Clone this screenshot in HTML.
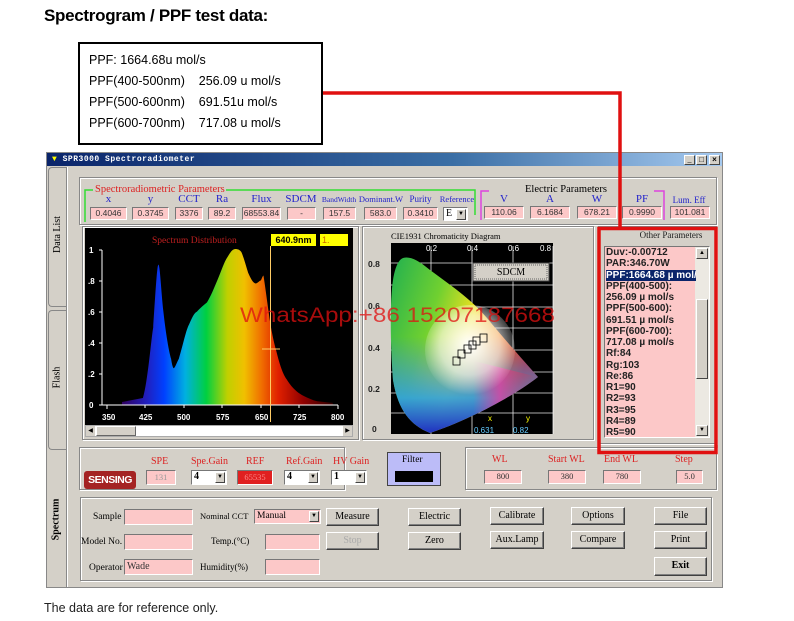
<!DOCTYPE html>
<html><head><meta charset="utf-8"><style>
*{margin:0;padding:0;box-sizing:border-box}
body{width:794px;height:621px;background:#fff;position:relative;overflow:hidden;font-family:"Liberation Serif",serif}
.a{position:absolute}
.t{position:absolute;font-size:10px;white-space:nowrap}
.in{position:absolute;background:#fcc8c8;border:1px solid;border-color:#777 #fff #fff #777;font-family:"Liberation Sans",sans-serif;font-size:8.5px;text-align:center;line-height:11px;color:#333}
.inL{text-align:left;padding-left:2px;font-family:"Liberation Serif",serif;font-size:10px}
.sel{position:absolute;background:#fff;border:1px solid;border-color:#777 #fff #fff #777;font-size:10px;font-weight:bold;padding-left:2px;line-height:12px}
.sel i{position:absolute;right:1px;top:1px;width:10px;height:11px;background:#d4d0c8;border:1px solid;border-color:#fff #444 #444 #fff;font-style:normal;font-size:6px;text-align:center;line-height:9px}
.btn{position:absolute;background:#d4d0c8;border:1px solid;border-color:#fff #404040 #404040 #fff;box-shadow:inset -1px -1px #808080;font-size:10px;text-align:center;line-height:16px}
.grp{position:absolute;border:1px solid #888;box-shadow:1px 1px #fff,inset 1px 1px #fff}
.lb{color:#2222cc;font-size:11px;text-align:center}
.rd{color:#dd2222}
</style></head><body>
<div class="a" style="left:44px;top:6px;font:bold 17px 'Liberation Sans',sans-serif;letter-spacing:-0.3px">Spectrogram / PPF test data:</div>
<div class="a" style="left:78px;top:42px;width:245px;height:103px;border:2.5px solid #000"></div>
<div class="a" style="left:89px;top:50px;font:12.5px 'Liberation Sans',sans-serif;line-height:21px;white-space:pre">PPF: 1664.68u mol/s
PPF(400-500nm)    256.09 u mol/s
PPF(500-600nm)    691.51u mol/s
PPF(600-700nm)    717.08 u mol/s</div>

<!-- window -->
<div class="a" style="left:46px;top:152px;width:677px;height:436px;background:#d4d0c8;border:1px solid #888"></div>
<div class="a" style="left:47px;top:153px;width:675px;height:13px;background:linear-gradient(90deg,#0a246a,#3a6ea5 60%,#a6caf0)"></div>
<div class="t" style="left:52px;top:153px;color:#fff;font:bold 8px 'Liberation Mono',monospace;line-height:13px;letter-spacing:0.5px"><span style="color:#ff0">▼</span> SPR3000 Spectroradiometer</div>
<div class="a" style="left:684px;top:155px;width:11px;height:10px;background:#d4d0c8;border:1px solid;border-color:#fff #444 #444 #fff;font-size:8px;line-height:8px;text-align:center">_</div>
<div class="a" style="left:696px;top:155px;width:11px;height:10px;background:#d4d0c8;border:1px solid;border-color:#fff #444 #444 #fff;font-size:8px;line-height:8px;text-align:center">□</div>
<div class="a" style="left:709px;top:155px;width:11px;height:10px;background:#d4d0c8;border:1px solid;border-color:#fff #444 #444 #fff;font:bold 8px sans-serif;line-height:8px;text-align:center">×</div>
<!-- tab strip -->
<div class="a" style="left:47px;top:167px;width:20px;height:420px;border-right:1px solid #888;box-shadow:1px 0 #fff"></div>
<div class="a" style="left:48px;top:167px;width:18px;height:140px;border:1px solid #888;border-right:none;border-radius:4px 0 0 4px"></div>
<div class="a" style="left:48px;top:310px;width:18px;height:140px;border:1px solid #888;border-right:none;border-radius:4px 0 0 4px"></div>
<div class="t" style="left:39px;top:229px;transform:rotate(-90deg);font-size:10px">Data List</div>
<div class="t" style="left:46px;top:372px;transform:rotate(-90deg);font-size:10px">Flash</div>
<div class="t" style="left:35px;top:514px;transform:rotate(-90deg);font-size:10px;font-weight:bold">Spectrum</div>

<!-- params group -->
<div class="grp" style="left:79px;top:177px;width:638px;height:48px"></div>
<div class="t rd" style="left:95px;top:184px;font-size:10.5px">Spectroradiometric Parameters</div>
<div class="t" style="left:525px;top:184px;font-size:10.5px">Electric Parameters</div>
<div class="t" style="left:628px;top:230px;font-size:9px;color:#222;width:86px;text-align:center">Other Parameters</div>
<div class="t" style="left:391px;top:231px;font-size:8.5px">CIE1931 Chromaticity Diagram</div>

<div class="t lb" style="left:90px;top:193px;width:37px">x</div>
<div class="t lb" style="left:132px;top:193px;width:37px">y</div>
<div class="t lb" style="left:175px;top:193px;width:28px">CCT</div>
<div class="t lb" style="left:208px;top:193px;width:28px">Ra</div>
<div class="t lb" style="left:242px;top:193px;width:39px">Flux</div>
<div class="t lb" style="left:285px;top:193px;width:32px">SDCM</div>
<div class="t lb" style="left:320px;top:195px;width:38px;font-size:7.5px">BandWidth</div>
<div class="t lb" style="left:357px;top:194px;width:48px;font-size:8.5px">Dominant.W</div>
<div class="t lb" style="left:403px;top:194px;width:35px;font-size:9px">Purity</div>
<div class="t lb" style="left:439px;top:194px;width:36px;font-size:8.5px">Reference</div>
<div class="t lb" style="left:484px;top:193px;width:40px">V</div>
<div class="t lb" style="left:530px;top:193px;width:40px">A</div>
<div class="t lb" style="left:577px;top:193px;width:40px">W</div>
<div class="t lb" style="left:622px;top:193px;width:40px">PF</div>
<div class="t lb" style="left:668px;top:195px;width:42px;font-size:9px">Lum. Eff</div>
<div class="in" style="left:90px;top:207px;width:37px;height:13px">0.4046</div>
<div class="in" style="left:132px;top:207px;width:37px;height:13px">0.3745</div>
<div class="in" style="left:175px;top:207px;width:28px;height:13px">3376</div>
<div class="in" style="left:208px;top:207px;width:28px;height:13px">89.2</div>
<div class="in" style="left:242px;top:207px;width:39px;height:13px">68553.84</div>
<div class="in" style="left:287px;top:207px;width:29px;height:13px">-</div>
<div class="in" style="left:323px;top:207px;width:33px;height:13px">157.5</div>
<div class="in" style="left:364px;top:207px;width:33px;height:13px">583.0</div>
<div class="in" style="left:403px;top:207px;width:35px;height:13px">0.3410</div>
<div class="sel" style="left:443px;top:207px;width:25px;height:14px;font-weight:normal">E<i>▼</i></div>
<div class="in" style="left:484px;top:206px;width:40px;height:13px">110.06</div>
<div class="in" style="left:530px;top:206px;width:40px;height:13px">6.1684</div>
<div class="in" style="left:577px;top:206px;width:40px;height:13px">678.21</div>
<div class="in" style="left:622px;top:206px;width:40px;height:13px">0.9990</div>
<div class="in" style="left:670px;top:206px;width:40px;height:13px">101.081</div>

<!-- spectrum -->
<div class="grp" style="left:82px;top:226px;width:277px;height:214px"></div>
<div class="a" style="left:85px;top:228px;width:268px;height:197px;background:#000"></div>
<div class="a" style="left:85px;top:425px;width:268px;height:12px;background:#fff;border:1px solid #aaa"></div>
<div class="a" style="left:86px;top:426px;width:9px;height:10px;background:#d4d0c8;font-size:6px;line-height:10px;text-align:center">◀</div>
<div class="a" style="left:96px;top:426px;width:40px;height:10px;background:#d4d0c8;border:1px solid;border-color:#fff #666 #666 #fff"></div>
<div class="a" style="left:343px;top:426px;width:9px;height:10px;background:#d4d0c8;font-size:6px;line-height:10px;text-align:center">▶</div>
<div class="t rd" style="left:152px;top:236px;font-size:9.5px;color:#c02020">Spectrum Distribution</div>
<div class="a" style="left:271px;top:234px;width:45px;height:12px;background:#ff0;font:bold 9px 'Liberation Sans',sans-serif;line-height:12px;text-align:center">640.9nm</div>
<div class="a" style="left:320px;top:234px;width:28px;height:12px;background:#ff0;font:9px 'Liberation Sans',sans-serif;line-height:12px;color:#c60;padding-left:2px">1.</div>

<!-- CIE -->
<div class="grp" style="left:362px;top:226px;width:232px;height:214px"></div>
<div class="a" style="left:391px;top:243px;width:162px;height:191px;background:#000"></div>

<!-- other params -->
<div class="grp" style="left:598px;top:226px;width:119px;height:218px"></div>
<div class="a" style="left:604px;top:246px;width:106px;height:192px;background:#fcc8c8;border:1px solid;border-color:#777 #fff #fff #777"></div>
<div class="a" style="left:695px;top:247px;width:14px;height:190px;background:#ece9e2"></div>
<div class="a" style="left:696px;top:248px;width:12px;height:11px;background:#d4d0c8;border:1px solid;border-color:#fff #444 #444 #fff;font-size:6px;text-align:center;line-height:9px">▲</div>
<div class="a" style="left:696px;top:299px;width:12px;height:80px;background:#d4d0c8;border:1px solid;border-color:#fff #444 #444 #fff"></div>
<div class="a" style="left:696px;top:425px;width:12px;height:11px;background:#d4d0c8;border:1px solid;border-color:#fff #444 #444 #fff;font-size:6px;text-align:center;line-height:9px">▼</div>
<div class="a" style="left:606px;top:247px;width:90px;font:bold 10px 'Liberation Sans',sans-serif;line-height:11.25px;color:#222;white-space:nowrap;overflow:hidden">Duv:-0.00712<br>PAR:346.70W<br><span style="display:block;background:#0a246a;color:#fff">PPF:1664.68 µ mol/s</span>PPF(400-500):<br>256.09 µ mol/s<br>PPF(500-600):<br>691.51 µ mol/s<br>PPF(600-700):<br>717.08 µ mol/s<br>Rf:84<br>Rg:103<br>Re:86<br>R1=90<br>R2=93<br>R3=95<br>R4=89<br>R5=90</div>

<!-- sensing group -->
<div class="grp" style="left:79px;top:447px;width:266px;height:43px"></div>
<div class="a" style="left:84px;top:471px;width:52px;height:18px;background:#a42323;border-radius:3px;color:#fff;font:bold 10.5px 'Liberation Sans',sans-serif;line-height:18px;text-align:center;letter-spacing:-0.5px">SENSING</div>
<div class="t rd" style="left:151px;top:456px">SPE</div>
<div class="t rd" style="left:191px;top:456px">Spe.Gain</div>
<div class="t rd" style="left:246px;top:456px">REF</div>
<div class="t rd" style="left:286px;top:456px">Ref.Gain</div>
<div class="t rd" style="left:333px;top:456px">HV Gain</div>
<div class="in" style="left:146px;top:470px;width:30px;height:15px;line-height:13px;font-family:'Liberation Serif';color:#999">131</div>
<div class="sel" style="left:191px;top:470px;width:36px;height:15px">4<i>▼</i></div>
<div class="in" style="left:237px;top:470px;width:36px;height:15px;line-height:13px;background:#e02020;color:#f88;font-family:'Liberation Serif'">65535</div>
<div class="sel" style="left:284px;top:470px;width:36px;height:15px">4<i>▼</i></div>
<div class="sel" style="left:331px;top:470px;width:36px;height:15px">1<i>▼</i></div>
<div class="a" style="left:387px;top:452px;width:54px;height:34px;background:#bcbcf8;border:1px solid #444"></div>
<div class="t" style="left:402px;top:455px;font-size:9.5px">Filter</div>
<div class="a" style="left:395px;top:471px;width:38px;height:11px;background:#000"></div>
<div class="grp" style="left:465px;top:447px;width:252px;height:43px"></div>
<div class="t rd" style="left:492px;top:454px">WL</div>
<div class="t rd" style="left:548px;top:454px">Start WL</div>
<div class="t rd" style="left:604px;top:454px">End WL</div>
<div class="t rd" style="left:675px;top:454px">Step</div>
<div class="in" style="left:484px;top:470px;width:38px;height:14px;font-family:'Liberation Serif'">800</div>
<div class="in" style="left:548px;top:470px;width:38px;height:14px;font-family:'Liberation Serif'">380</div>
<div class="in" style="left:603px;top:470px;width:38px;height:14px;font-family:'Liberation Serif'">780</div>
<div class="in" style="left:676px;top:470px;width:27px;height:14px;font-family:'Liberation Serif'">5.0</div>

<!-- bottom group -->
<div class="grp" style="left:80px;top:497px;width:632px;height:84px"></div>
<div class="t" style="left:93px;top:512px;font-size:9.5px">Sample</div>
<div class="t" style="left:81px;top:537px;font-size:9.5px">Model No.</div>
<div class="t" style="left:89px;top:563px;font-size:9.5px">Operator</div>
<div class="in" style="left:124px;top:509px;width:69px;height:16px"></div>
<div class="in" style="left:124px;top:534px;width:69px;height:16px"></div>
<div class="in inL" style="left:124px;top:559px;width:69px;height:16px;line-height:14px">Wade</div>
<div class="t" style="left:200px;top:511px;font-size:8.5px">Nominal CCT</div>
<div class="t" style="left:211px;top:536px;font-size:9px">Temp.(°C)</div>
<div class="t" style="left:200px;top:562px;font-size:9px">Humidity(%)</div>
<div class="sel" style="left:254px;top:509px;width:67px;height:15px;background:#fcc8c8;font-weight:normal;font-size:9.5px">Manual<i>▼</i></div>
<div class="in" style="left:265px;top:534px;width:55px;height:16px"></div>
<div class="in" style="left:265px;top:559px;width:55px;height:16px"></div>
<div class="btn" style="left:326px;top:508px;width:53px;height:18px">Measure</div>
<div class="btn" style="left:326px;top:532px;width:53px;height:18px;color:#aaa">Stop</div>
<div class="btn" style="left:408px;top:508px;width:53px;height:18px">Electric</div>
<div class="btn" style="left:408px;top:532px;width:53px;height:18px">Zero</div>
<div class="btn" style="left:490px;top:507px;width:54px;height:18px">Calibrate</div>
<div class="btn" style="left:490px;top:531px;width:54px;height:18px">Aux.Lamp</div>
<div class="btn" style="left:571px;top:507px;width:54px;height:18px">Options</div>
<div class="btn" style="left:571px;top:531px;width:54px;height:18px">Compare</div>
<div class="btn" style="left:654px;top:507px;width:53px;height:18px">File</div>
<div class="btn" style="left:654px;top:531px;width:53px;height:18px">Print</div>
<div class="btn" style="left:654px;top:557px;width:53px;height:19px;font-weight:bold">Exit</div>

<div class="a" style="left:44px;top:601px;font:12.5px 'Liberation Sans',sans-serif;color:#222">The data are for reference only.</div>

<svg class="a" style="left:0;top:0" width="794" height="621" viewBox="0 0 794 621">
<defs>
<linearGradient id="sp" x1="122" x2="333" y1="0" y2="0" gradientUnits="userSpaceOnUse">
<stop offset="0" stop-color="#300060"/><stop offset=".12" stop-color="#2020c0"/><stop offset=".2" stop-color="#0040ff"/>
<stop offset=".3" stop-color="#00b0e0"/><stop offset=".4" stop-color="#00d040"/><stop offset=".5" stop-color="#c0d000"/>
<stop offset=".58" stop-color="#f0c000"/><stop offset=".66" stop-color="#f07000"/><stop offset=".74" stop-color="#e02000"/>
<stop offset=".86" stop-color="#900000"/><stop offset="1" stop-color="#300000"/></linearGradient>
<linearGradient id="cg" x1="0" y1="0" x2="1" y2="0.4">
<stop offset="0" stop-color="#20b050"/><stop offset=".35" stop-color="#70d030"/><stop offset=".6" stop-color="#f0e020"/><stop offset=".8" stop-color="#f08020"/><stop offset="1" stop-color="#e02020"/></linearGradient>
<linearGradient id="cb" x1="0" y1="0" x2="0" y2="1">
<stop offset=".45" stop-color="#3080f0" stop-opacity="0"/><stop offset=".8" stop-color="#30a0e0" stop-opacity=".9"/><stop offset="1" stop-color="#2030c0"/></linearGradient>
<radialGradient id="cw" cx="470" cy="345" r="50" gradientUnits="userSpaceOnUse"><stop offset="0" stop-color="#fff"/><stop offset=".6" stop-color="#fff" stop-opacity=".6"/><stop offset="1" stop-color="#fff" stop-opacity="0"/></radialGradient>
<linearGradient id="cm" x1="0" y1="0" x2="1" y2="0"><stop offset=".4" stop-color="#e040a0" stop-opacity="0"/><stop offset=".65" stop-color="#e040a0" stop-opacity=".8"/><stop offset="1" stop-color="#e03030" stop-opacity="0"/></linearGradient>
</defs>
<path fill="url(#sp)" d="M122,402 L142.9,398 C148,380 151,340 153.2,327.5 C155,300 157,265 158.3,264.7 C160,264 161,290 163.4,311.8 C166,335 169,352 171.1,358.9 C172,365 173,368 173.7,368.3 C175,368 177,362 178.8,358.9 C183,345 186,330 189.1,324.4 C192,318 194,313 196.8,311.8 C200,308 204,305 207,302.4 C211,296 214,288 217.3,280.4 C221,272 224,262 227.6,256.9 C231,251 233,249 235.3,249 C238,249 240,250 241.4,252.1 C244,258 246,266 248.1,272.6 C251,279 253,283 255.8,283.5 C258,283 259,281 260.9,280.4 C262,278 263,275 263.5,275.7 C265,285 267,300 268.6,311.8 C271,330 274,343 276.3,351 C280,366 283,374 286.6,379.3 C292,388 297,392 301.9,395 C308,398 312,400 317.3,401.3 L332.7,402.9 L333,405 L122,405Z"/>
<g stroke="#fff" stroke-width="1" fill="none"><path d="M102,405H338M102,405V250"/>
<path d="M99,250h3M99,281h3M99,312h3M99,343h3M99,374h3M99,405h3M107,405v4M145,405v3M184,405v3M222,405v3M261,405v3M299,405v3M338,405v4"/></g>
<line x1="270.5" y1="246" x2="270.5" y2="422" stroke="#ffcc66"/><line x1="262" y1="349" x2="280" y2="349" stroke="#ffcc66"/>
<g fill="#fff" font-family="Liberation Sans,sans-serif" font-size="8" font-weight="bold">
<text x="89" y="253">1</text><text x="88" y="284">.8</text><text x="88" y="315">.6</text><text x="88" y="346">.4</text><text x="88" y="377">.2</text><text x="89" y="408">0</text>
<text x="102" y="420">350</text><text x="139" y="420">425</text><text x="177" y="420">500</text><text x="216" y="420">575</text><text x="255" y="420">650</text><text x="293" y="420">725</text><text x="331" y="420">800</text></g>
<g stroke="#fff" stroke-width="0.8" opacity=".9"><path d="M431,246V434M472,246V434M513,246V434M553,246V434M391,263H553M391,285H553M391,307H553M391,328H553M391,350H553M391,372H553M391,393H553M391,413H553"/></g>
<path d="M403,258 C410,256 418,260 430,270 C450,285 470,298 487,318 C505,340 525,362 538,377 C515,395 470,420 430,433 C410,425 398,410 393,380 C390,340 390,300 393,280 C395,268 398,260 403,258Z" fill="url(#cg)"/>
<path d="M403,258 C410,256 418,260 430,270 C450,285 470,298 487,318 C505,340 525,362 538,377 C515,395 470,420 430,433 C410,425 398,410 393,380 C390,340 390,300 393,280 C395,268 398,260 403,258Z" fill="url(#cb)"/>
<path d="M430,433 C470,420 515,395 538,377 L470,360Z" fill="url(#cm)"/>
<circle cx="470" cy="350" r="45" fill="url(#cw)"/>
<g fill="none" stroke="#000" stroke-width=".8"><rect x="453" y="357" width="7" height="8"/><rect x="458" y="350" width="7" height="8"/><rect x="464" y="345" width="7" height="8"/><rect x="469" y="341" width="7" height="8"/><rect x="473" y="337" width="7" height="8"/><rect x="480" y="334" width="7" height="8"/></g>
<g font-family="Liberation Sans,sans-serif" font-size="8" fill="#fff"><text x="426" y="251">0.2</text><text x="467" y="251">0.4</text><text x="508" y="251">0.6</text><text x="540" y="251">0.8</text>
<text x="488" y="421" fill="#ff0">x</text><text x="526" y="421" fill="#ff0">y</text><text x="474" y="433" fill="#6cf">0.631</text><text x="513" y="433" fill="#6cf">0.82</text></g>
<g font-family="Liberation Sans,sans-serif" font-size="8.5" font-weight="bold" fill="#222"><text x="368" y="267">0.8</text><text x="368" y="309">0.6</text><text x="368" y="351">0.4</text><text x="368" y="392">0.2</text><text x="372" y="432">0</text></g>
<rect x="473" y="263" width="76" height="18" fill="#d4d0c8" stroke="#444"/><rect x="475" y="265" width="72" height="14" fill="none" stroke="#666" stroke-dasharray="1 1"/>
<text x="511" y="275" text-anchor="middle" font-family="Liberation Serif,serif" font-size="10">SDCM</text>
<g fill="none" stroke-width="1.5"><path d="M85,222V190H93M226,190H475V215" stroke="#33dd33"/><path d="M481,220V191H489" stroke="#dd44dd"/><path d="M654,191H664V220" stroke="#dd44dd"/></g>
<path d="M323,93H620V228" fill="none" stroke="#e01010" stroke-width="3.5"/>
<rect x="599" y="228.5" width="117" height="224" fill="none" stroke="#e01010" stroke-width="3.5"/>
<text x="240" y="322" font-family="Liberation Sans,sans-serif" font-size="21" textLength="315" lengthAdjust="spacingAndGlyphs" fill="#e01010" fill-opacity=".75">WhatsApp:+86 15207187668</text>
</svg>
</body></html>
